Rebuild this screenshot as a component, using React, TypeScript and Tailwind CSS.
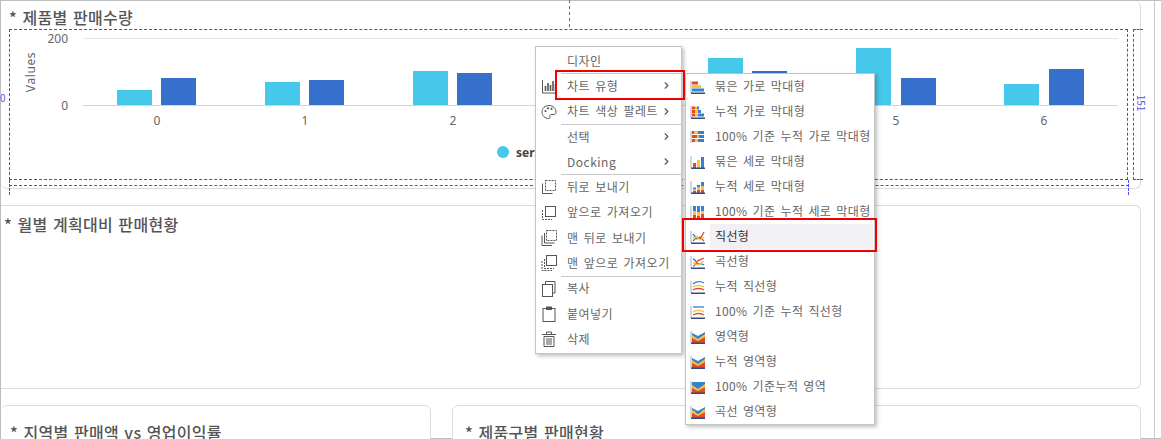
import type { ReactNode } from "react";
import { ChevronRight } from "lucide-react";

const FONT = "font-['Noto_Sans_CJK_KR','Noto_Sans',sans-serif]";

// chart data as pixel tops of each bar; baseline sits at y=105
const GROUPS = [
  { label: "0", x: 117, blueX: 161, cyan: 90, blue: 78 },
  { label: "1", x: 265, blueX: 309, cyan: 82, blue: 80 },
  { label: "2", x: 413, blueX: 457, cyan: 71, blue: 73 },
  { label: "3", x: 561, blueX: 605, cyan: 85, blue: 85 },
  { label: "4", x: 708, blueX: 752, cyan: 58, blue: 71 },
  { label: "5", x: 856, blueX: 901, cyan: 48, blue: 78 },
  { label: "6", x: 1004, blueX: 1049, cyan: 84, blue: 69 },
];

function BarChart() {
  return (
    <svg width="1139" height="142" viewBox="1 28 1139 142" className="mt-px block" style={{ fontFamily: "'Noto Sans', sans-serif" }}>
      <line x1="83" x2="1118" y1="38.5" y2="38.5" stroke="#e6e6e6" />
      <line x1="83" x2="1118" y1="105.5" y2="105.5" stroke="#ccd6e3" />
      <text x="68" y="42.5" textAnchor="end" fontSize="12" fill="#666">200</text>
      <text x="68" y="109.5" textAnchor="end" fontSize="12" fill="#666">0</text>
      <text transform="translate(35 72) rotate(-90)" textAnchor="middle" fontSize="12" letterSpacing="0.6" fill="#666">Values</text>
      {GROUPS.map((g) => (
        <g key={g.label}>
          <rect x={g.x} y={g.cyan} width="35" height={105 - g.cyan} fill="#45c8eb" />
          <rect x={g.blueX} y={g.blue} width="35" height={105 - g.blue} fill="#376fcd" />
          <text x={g.x + 40} y="124.500" textAnchor="middle" fontSize="12" fill="#666">{g.label}</text>
        </g>
      ))}
      <circle cx="503" cy="152" r="6" fill="#45c8eb" />
      <text x="516" y="157" fontSize="12" fontWeight="700" fill="#444">series1</text>
    </svg>
  );
}

function DesignGuides() {
  return (
    <>
      <div className="absolute left-[569px] top-0 h-[28px] w-px bg-[repeating-linear-gradient(to_bottom,#5a5ae0_0,#5a5ae0_3px,transparent_3px,transparent_6px)]" />
      <div className="absolute left-[9px] top-[29px] h-[151px] w-[1119px] border border-dashed border-[#e81c1c]" />
      <div className="absolute left-[9px] top-[185px] w-[1120px] border-t border-dashed border-[#4a4af0]" />
      <div className="absolute left-[9px] top-[180px] h-[15px] border-l border-dashed border-[#4a4af0]" />
      <div className="absolute left-[1128px] top-[180px] h-[15px] border-l border-dashed border-[#4a4af0]" />
      <div className="absolute left-[1133px] top-[29px] h-[151px] w-[10px] border-y border-l border-dashed border-[#4a4af0]" />
      <span className="absolute left-0 top-[91px] text-[10px] leading-[14px] text-[#5a5af0]">0</span>
      <span className="absolute left-[1133px] top-[96px] rotate-90 text-[10px] leading-[14px] text-[#5a5af0]">151</span>
    </>
  );
}

function MenuGlyph({ kind }: { kind: string }) {
  const p = { fill: "none", stroke: "#555", strokeWidth: 1 };
  const dash = { ...p, strokeDasharray: "2 1" };
  return (
    <svg width="16" height="16" viewBox="0 0 16 16">
      {kind === "bars" && (
        <g {...p}>
          <path d="M1.500 2v13h14" />
          <path d="M4.500 13V8M7 13V5M9.500 13V7M12 13V3M14.500 13V6" strokeWidth="1.600" />
        </g>
      )}
      {kind === "palette" && (
        <g>
          <path d="M8 1.500C4 1.500 1 4.300 1 8s3 6.500 6.500 6.500c1.500 0 1.800-1 1.300-2-.5-1.200.2-2 1.400-2H13c1.200 0 2-.9 2-2.200C15 4.300 12 1.500 8 1.500z" {...p} />
          <circle cx="4.500" cy="7" r="1.100" fill="#555" />
          <circle cx="7" cy="4.300" r="1.100" fill="#555" />
          <circle cx="10.500" cy="4.800" r="1.100" fill="#555" />
        </g>
      )}
      {kind === "back" && (
        <g>
          <rect x="4.500" y="1.500" width="10" height="10" {...dash} />
          <path d="M1.500 4.500v10h10" {...p} />
        </g>
      )}
      {kind === "front" && (
        <g>
          <path d="M1.500 5v9.500H11" {...dash} />
          <rect x="4.500" y="1.500" width="10" height="10" fill="#fff" stroke="#555" />
        </g>
      )}
      {kind === "toBack" && (
        <g>
          <rect x="5.500" y="0.500" width="10" height="10" {...dash} />
          <path d="M3.500 3v10h10M1 5.500v10h10" {...p} />
        </g>
      )}
      {kind === "toFront" && (
        <g>
          <path d="M3.500 4v9.500H13M1 6v9.500h10" {...dash} />
          <rect x="5.500" y="0.500" width="10" height="10" fill="#fff" stroke="#555" />
        </g>
      )}
      {kind === "copy" && (
        <g {...p}>
          <path d="M4.500 3V0.500h9.500v11.500h-2.500" />
          <rect x="1.500" y="3.500" width="10" height="12" />
        </g>
      )}
      {kind === "paste" && (
        <g>
          <rect x="2" y="2.500" width="12" height="13" {...p} />
          <rect x="5" y="0.500" width="6" height="3.500" fill="#555" />
        </g>
      )}
      {kind === "trash" && (
        <g {...p}>
          <path d="M1 3.500h14M5.500 3V1h5v2" />
          <path d="M3 5.500h10v10H3z" />
          <path d="M6 7v7M8 7v7M10 7v7" />
        </g>
      )}
    </svg>
  );
}

const MAIN_MENU = [
  { label: "디자인" },
  { label: "차트 유형", icon: "bars", sub: true, sep: true },
  { label: "차트 색상 팔레트", icon: "palette", sub: true, sep: true },
  { label: "선택", sub: true, sep: true },
  { label: "Docking", sub: true },
  { label: "뒤로 보내기", icon: "back", sep: true },
  { label: "앞으로 가져오기", icon: "front" },
  { label: "맨 뒤로 보내기", icon: "toBack" },
  { label: "맨 앞으로 가져오기", icon: "toFront" },
  { label: "복사", icon: "copy", sep: true },
  { label: "붙여넣기", icon: "paste" },
  { label: "삭제", icon: "trash" },
];

function ContextMenu() {
  return (
    <div className="absolute left-[535px] top-[46px] w-[147px] border border-[#c4c4c4] bg-white py-px shadow-[2px_2px_4px_rgba(0,0,0,0.25)]">
      {MAIN_MENU.map((item) => (
        <div key={item.label} className="relative flex h-[25.300px] items-center pl-[31px] pr-[9px]">
          {item.sep && <div className="absolute left-[25px] right-0 top-0 border-t border-[#c8c8c8]" />}
          {item.icon && (
            <span className="absolute left-[5px] top-[5px]">
              <MenuGlyph kind={item.icon} />
            </span>
          )}
          <span className="flex-1 whitespace-nowrap text-[12px] tracking-[0.5px] text-[#666] [word-spacing:2px]">{item.label}</span>
          {item.sub && <ChevronRight size={11} strokeWidth={2.4} className="text-[#555]" />}
        </div>
      ))}
    </div>
  );
}

const C = { red: "#e2492a", orange: "#f08a24", yellow: "#f9c23c", blue: "#3580cf", navy: "#2c4f80", axis: "#9fb0c4" };

// one row of a stacked horizontal bar icon: [red, yellow, blue] widths
function HRow({ y, parts, h = 3 }: { y: number; parts: number[]; h?: number }) {
  const fills = [C.red, C.yellow, C.blue];
  let x = 2;
  return (
    <>
      {parts.map((w, i) => {
        const r = <rect key={i} x={x} y={y} width={w} height={h} fill={fills[i]} />;
        x += w;
        return r;
      })}
    </>
  );
}

// one column of a stacked vertical bar icon: [red, yellow, blue] heights from the bottom
function VCol({ x, parts }: { x: number; parts: number[] }) {
  const fills = [C.red, C.yellow, C.blue];
  let y = 14;
  return (
    <>
      {parts.map((h, i) => {
        y -= h;
        return <rect key={i} x={x} y={y} width="3" height={h} fill={fills[i]} />;
      })}
    </>
  );
}

function ChartGlyph({ kind }: { kind: string }) {
  const axis = <rect x="0.500" y="2" width="1" height="12" fill={C.axis} />;
  const base = <rect x="1" y="13.500" width="14" height="1.500" fill={C.navy} />;
  return (
    <svg width="16" height="16" viewBox="0 0 16 16">
      {kind === "hCluster" && (
        <g>
          {axis}
          <rect x="2" y="2.500" width="6" height="3" fill={C.red} />
          <rect x="2" y="6" width="9" height="3" fill={C.yellow} />
          <rect x="2" y="9.500" width="12" height="3" fill={C.blue} />
          {base}
        </g>
      )}
      {kind === "hStack" && (
        <g>
          {axis}
          <HRow y={2.5} parts={[3, 2, 2]} />
          <HRow y={6} parts={[3, 3, 3]} />
          <HRow y={9.5} parts={[3, 3, 6]} />
          {base}
        </g>
      )}
      {kind === "hFull" && (
        <g>
          {axis}
          <HRow y={2} parts={[2, 4, 6]} />
          <HRow y={6} parts={[5, 2, 5]} />
          <HRow y={10} parts={[3, 3, 6]} />
        </g>
      )}
      {kind === "vCluster" && (
        <g>
          {axis}
          <rect x="3" y="9" width="3" height="5" fill={C.red} />
          <rect x="7" y="6" width="3" height="8" fill={C.yellow} />
          <rect x="11" y="3" width="3" height="11" fill={C.blue} />
          {base}
        </g>
      )}
      {kind === "vStack" && (
        <g>
          {axis}
          <VCol x={3} parts={[2.5, 1.5, 1.5]} />
          <VCol x={7} parts={[3, 3, 2]} />
          <VCol x={11} parts={[3, 4, 4]} />
          {base}
        </g>
      )}
      {kind === "vFull" && (
        <g>
          {axis}
          <VCol x={3} parts={[3, 4, 5]} />
          <VCol x={7} parts={[2, 4, 6]} />
          <VCol x={11} parts={[4, 3, 5]} />
        </g>
      )}
      {(kind === "line" || kind === "curve") && (
        <g fill="none" strokeWidth="1.300">
          {axis}
          {base}
          {kind === "line" ? (
            <>
              <path d="M3 5l4 5 3-2 4 4" stroke={C.blue} />
              <path d="M3 12l4-4 3 2 4-7" stroke={C.red} />
              <path d="M3 9l4-1 3 3 4-3" stroke={C.yellow} />
            </>
          ) : (
            <>
              <path d="M3 5c3 0 3 5 5 5s3-1 6 1" stroke={C.blue} />
              <path d="M3 12c3 0 4-6 6-6s3-1 5-2" stroke={C.red} />
              <path d="M3 9c3 0 3 2 5 2s4-3 6-4" stroke={C.yellow} />
            </>
          )}
        </g>
      )}
      {(kind === "lineStack" || kind === "lineFull") && (
        <g fill="none" strokeWidth="1.300">
          {axis}
          {base}
          <path d={kind === "lineFull" ? "M3 3h11" : "M3 5c3-3 8-3 11-1"} stroke={C.blue} />
          <path d="M3 8c3-2 8-2 11 0" stroke={C.yellow} />
          <path d="M3 11c3-2 8-2 11 0" stroke={C.red} />
        </g>
      )}
      {kind.startsWith("area") && (
        <g>
          {axis}
          <path d={kind === "areaFull" ? "M2 3h13v11H2z" : "M2 4l6 3 7-4v11H2z"} fill={C.blue} />
          <path d={kind === "areaCurve" ? "M2 6c3 0 4 4 6 4s5-5 7-5v9H2z" : "M2 6l6 4 7-5v9H2z"} fill={C.yellow} />
          <path d="M2 9l6 3 7-4v6H2z" fill={C.red} />
          {base}
        </g>
      )}
    </svg>
  );
}

const CHART_TYPES = [
  { label: "묶은 가로 막대형", icon: "hCluster" },
  { label: "누적 가로 막대형", icon: "hStack" },
  { label: "100% 기준 누적 가로 막대형", icon: "hFull" },
  { label: "묶은 세로 막대형", icon: "vCluster" },
  { label: "누적 세로 막대형", icon: "vStack" },
  { label: "100% 기준 누적 세로 막대형", icon: "vFull" },
  { label: "직선형", icon: "line", active: true },
  { label: "곡선형", icon: "curve" },
  { label: "누적 직선형", icon: "lineStack" },
  { label: "100% 기준 누적 직선형", icon: "lineFull" },
  { label: "영역형", icon: "area" },
  { label: "누적 영역형", icon: "areaStack" },
  { label: "100% 기준누적 영역", icon: "areaFull" },
  { label: "곡선 영역형", icon: "areaCurve" },
];

function ChartTypeMenu() {
  return (
    <div className="absolute left-[685px] top-[73px] w-[190px] border border-[#c4c4c4] bg-white shadow-[2px_2px_4px_rgba(0,0,0,0.25)]">
      {CHART_TYPES.map((item) => (
        <div key={item.label} className="relative flex h-[25px] items-center pl-[24px] pr-px">
          <span className="absolute left-[4px] top-[5px]">
            <ChartGlyph kind={item.icon} />
          </span>
          <span
            className={`flex h-full flex-1 items-center whitespace-nowrap pb-[2px] pl-[5px] text-[12px] tracking-[0.38px] [word-spacing:2px] ${
              item.active ? "bg-[#f0f0f5] text-[#333]" : "text-[#666]"
            }`}
          >
            {item.label}
          </span>
        </div>
      ))}
    </div>
  );
}

function Card({ title, className, titleClass, children }: { title: string; className: string; titleClass: string; children?: ReactNode }) {
  return (
    <section className={`overflow-hidden border border-[#dcdcdc] bg-white ${className}`}>
      <h2 className={`text-[16px] font-medium leading-[20px] tracking-[0.3px] text-[#555] [word-spacing:1.5px] ${titleClass}`}>{title}</h2>
      {children}
    </section>
  );
}

export default function App() {
  return (
    <div className={`relative h-[439px] w-[1161px] overflow-hidden bg-white ${FONT}`}>
      <div className="h-full border-y border-l border-[#bdbdbd]">
        <div className="h-full w-[1154px] border-r border-[#c8c8c8] pr-[13px]">
          <div className="flex flex-col gap-[16px]">
            <Card title="* 제품별 판매수량" className="h-[188px] rounded-b-[6px] rounded-tr-[6px] border-l-0 border-t-0" titleClass="pl-[8px] pt-[6px]">
              <BarChart />
            </Card>
            <Card title="* 월별 계획대비 판매현황" className="h-[184px] rounded-r-[6px] border-l-0" titleClass="pl-[3px] pt-[8px]" />
            <div className="flex gap-[21px]">
              <Card title="* 지역별 판매액 vs 영업이익률" className="h-[60px] w-[430px] rounded-t-[6px] border-l-0" titleClass="pl-[9px] pt-[16px]" />
              <Card title="* 제품구별 판매현황" className="h-[60px] flex-1 rounded-t-[6px]" titleClass="pl-[12px] pt-[16px]" />
            </div>
          </div>
        </div>
      </div>

      <DesignGuides />
      <ContextMenu />
      <ChartTypeMenu />

      <div className="absolute left-[555px] top-[70px] h-[30px] w-[130px] border-2 border-[#f00000]" />
      <div className="absolute left-[682px] top-[218px] h-[34px] w-[195px] border-2 border-[#f00000]" />
    </div>
  );
}
